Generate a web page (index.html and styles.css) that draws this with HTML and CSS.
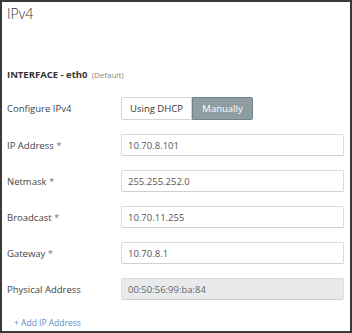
FILE: index.html
```html
<!DOCTYPE html>
<html lang="en">
<head>
    <meta charset="UTF-8">
    <meta name="viewport" content="width=device-width, initial-scale=1.0">
    <title>IPv4</title>
    <link rel="stylesheet" href="styles.css">
</head>
<body>
    <div class="panel">
        <h1 class="panel-title">IPv4</h1>

        <div class="iface">
            <span class="iface-name">INTERFACE - eth0</span>
            <span class="iface-note">(Default)</span>
        </div>

        <!-- Form -->
        <div class="form">
            <label class="field-label">Configure IPv4</label>
            <div class="toggle">
                <button class="toggle-btn">Using DHCP</button>
                <button class="toggle-btn active">Manually</button>
            </div>

            <label class="field-label">IP Address <span class="req">*</span></label>
            <input class="field-input" type="text" value="10.70.8.101">

            <label class="field-label">Netmask <span class="req">*</span></label>
            <input class="field-input" type="text" value="255.255.252.0">

            <label class="field-label">Broadcast <span class="req">*</span></label>
            <input class="field-input" type="text" value="10.70.11.255">

            <label class="field-label">Gateway <span class="req">*</span></label>
            <input class="field-input" type="text" value="10.70.8.1">

            <label class="field-label">Physical Address</label>
            <input class="field-input readonly" type="text" value="00:50:56:99:ba:84" readonly>
        </div>

        <a class="add-link" href="#">+ Add IP Address</a>
    </div>
</body>
</html>
```

FILE: styles.css
```css
* {
    margin: 0;
    padding: 0;
    box-sizing: border-box;
}

body {
    background: #fff;
    font-family: 'Open Sans', sans-serif;
    color: #444;
}

.panel {
    width: 352px;
    height: 333px;
    border: 2px solid #3a3a3a;
    padding: 3px 6px 0 5px;
}

.panel-title {
    font-size: 14px;
    font-weight: 300;
    line-height: 18px;
    color: #333;
}

/* Interface header */
.iface {
    margin-top: 41px;
    line-height: 16px;
}

.iface-name {
    font-size: 9.5px;
    font-weight: 700;
    color: #333;
}

.iface-note {
    font-size: 8px;
    color: #888;
}

/* Form rows */
.form {
    margin-top: 14px;
    display: grid;
    grid-template-columns: 114px 1fr;
    row-gap: 14px;
    align-items: center;
}

.field-label {
    font-size: 9.5px;
    color: #444;
}

.req {
    color: #777;
}

.toggle {
    display: flex;
    height: 23px;
}

.toggle-btn {
    font-family: inherit;
    font-size: 9.5px;
    background: #fff;
    color: #333;
    border: 1px solid #d4d4d4;
    border-radius: 2px 0 0 2px;
    width: 71px;
}

.toggle-btn.active {
    width: 61px;
    background: #8e9da2;
    border-color: #72838a;
    color: #fff;
    border-radius: 0 2px 2px 0;
}

.field-input {
    font-family: inherit;
    font-size: 9.5px;
    color: #555;
    height: 22px;
    border: 1px solid #dcdcdc;
    border-bottom-color: #d0d0d0;
    border-radius: 2px;
    padding: 0 6px;
    outline: none;
    width: 100%;
}

.field-input.readonly {
    background: #e8eaec;
    color: #666;
}

.add-link {
    display: block;
    margin-top: 17px;
    padding-left: 7px;
    font-size: 8.5px;
    color: #5a8cc4;
    text-decoration: none;
}
```
